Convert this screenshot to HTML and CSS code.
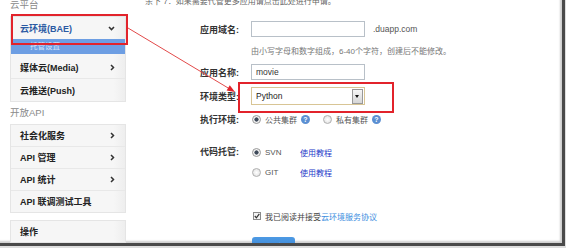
FILE: index.html
```html
<!DOCTYPE html>
<html lang="zh-CN">
<head>
    <meta charset="UTF-8">
    <title>创建应用</title>
    <link rel="stylesheet" href="styles.css">
</head>
<body>
    <div class="frame">
        <aside class="side">
            <div class="side-title first">云平台</div>
            <ul class="menu">
                <li class="item active">云环境(BAE)
                    <svg class="chev" width="7" height="5" viewBox="0 0 7 5"><path d="M1 1 L3.5 3.5 L6 1" fill="none" stroke="#333" stroke-width="1.6"/></svg>
                </li>
                <li class="sub">托管设置</li>
                <li class="item media">媒体云(Media)
                    <svg class="chev" width="5" height="7" viewBox="0 0 5 7"><path d="M1 1 L3.5 3.5 L1 6" fill="none" stroke="#333" stroke-width="1.5"/></svg>
                </li>
                <li class="item tall">云推送(Push)</li>
            </ul>
            <div class="side-title">开放API</div>
            <ul class="menu">
                <li class="item">社会化服务
                    <svg class="chev" width="5" height="7" viewBox="0 0 5 7"><path d="M1 1 L3.5 3.5 L1 6" fill="none" stroke="#333" stroke-width="1.5"/></svg>
                </li>
                <li class="item">API 管理
                    <svg class="chev" width="5" height="7" viewBox="0 0 5 7"><path d="M1 1 L3.5 3.5 L1 6" fill="none" stroke="#333" stroke-width="1.5"/></svg>
                </li>
                <li class="item">API 统计
                    <svg class="chev" width="5" height="7" viewBox="0 0 5 7"><path d="M1 1 L3.5 3.5 L1 6" fill="none" stroke="#333" stroke-width="1.5"/></svg>
                </li>
                <li class="item">API 联调测试工具</li>
            </ul>
            <ul class="menu">
                <li class="item">操作</li>
            </ul>
        </aside>

        <main class="main">
            <p class="note">余下 7：如果需要代管更多应用请点击此处进行申请。</p>
            <div class="form">
                <div class="row r1">
                    <span class="label">应用域名:</span>
                    <input class="text" type="text" value="">
                    <span class="suffix">.duapp.com</span>
                </div>
                <div class="hint">由小写字母和数字组成，6-40个字符，创建后不能修改。</div>
                <div class="row r2">
                    <span class="label">应用名称:</span>
                    <input class="text" type="text" value="movie">
                </div>
                <div class="row r3">
                    <span class="label">环境类型:</span>
                    <div class="select">
                        <span>Python</span>
                        <div class="arrow"></div>
                    </div>
                </div>
                <div class="row r4">
                    <span class="label">执行环境:</span>
                    <span class="opt"><i class="radio on"></i>公共集群<i class="help">?</i></span>
                    <span class="opt second"><i class="radio"></i>私有集群<i class="help">?</i></span>
                </div>
                <div class="row r5">
                    <span class="label">代码托管:</span>
                    <div class="choices">
                        <div class="line"><span class="opt fixed"><i class="radio on"></i>SVN</span><a class="link">使用教程</a></div>
                        <div class="line"><span class="opt fixed"><i class="radio"></i>GIT</span><a class="link">使用教程</a></div>
                    </div>
                </div>
                <div class="agree">
                    <i class="check">
                        <svg width="6" height="6" viewBox="0 0 6 6"><path d="M0.8 3 L2.4 4.8 L5.3 0.8" fill="none" stroke="#333" stroke-width="1.2"/></svg>
                    </i>
                    我已阅读并接受<a class="link light">云环境服务协议</a>
                </div>
                <button class="submit">确 定</button>
            </div>
        </main>

        <svg class="marks" width="562" height="243" viewBox="0 0 562 243">
            <rect x="12" y="15" width="115" height="29" fill="none" stroke="#e2232b" stroke-width="2"/>
            <rect x="239" y="83" width="154" height="29" fill="none" stroke="#e2232b" stroke-width="2"/>
            <line x1="128" y1="28" x2="229" y2="88.5" stroke="#e24a4a" stroke-width="1"/>
            <polygon points="235,92 226.6,90.4 229.8,85.2" fill="#e2232b"/>
        </svg>
    </div>
</body>
</html>
```

FILE: styles.css
```css
body {
    margin: 0;
    background-color: #dedede;
    font-family: 'Liberation Sans', 'Noto Sans CJK SC', sans-serif;
    color: #333;
}
.frame {
    position: relative;
    display: flex;
    width: 562px;
    height: 243px;
    background-color: #fff;
    border-right: 3px solid #4a4a4a;
    border-bottom: 3px solid #4a4a4a;
    box-shadow: inset -2px -2px 2px #cfcfcf;
    overflow: hidden;
}
.side {
    flex: none;
    width: 116px;
    margin-left: 10px;
}
.side-title {
    height: 22px;
    line-height: 22px;
    font-size: 9.5px;
    color: #8a8a8a;
}
.side-title.first {
    height: 14px;
    line-height: 14px;
    margin-top: -2px;
    margin-bottom: 4px;
}
.menu {
    list-style: none;
    margin: 0;
    padding: 0;
    background: linear-gradient(90deg, #f6f6f6 90%, #eeeeee);
    border: 1px solid #e5e5e5;
}
.menu + .menu {
    margin-top: 7px;
}
.item {
    display: flex;
    justify-content: space-between;
    align-items: center;
    height: 21px;
    padding: 0 9px;
    font-size: 9px;
    font-weight: bold;
    color: #222;
    border-top: 1px solid #e8e8e8;
}
.item:first-child {
    border-top: 0;
}
.item.active {
    height: 22px;
    color: #2b5aa3;
}
.item.media {
    height: 22px;
    margin-top: 2px;
    border-top: 0;
}
.item.tall {
    height: 22px;
}
.chev {
    margin-right: 1px;
}
.sub {
    height: 15px;
    line-height: 15px;
    padding-left: 19px;
    background-color: #6d9ee3;
    color: #d5e3f8;
    font-size: 7.5px;
}
.main {
    flex: 1;
    margin-left: 19px;
}
.note {
    margin: -4px 0 0;
    line-height: 12px;
    font-size: 8px;
    color: #666;
}
.form {
    padding-left: 55px;
}
.row {
    display: flex;
    align-items: center;
}
.label {
    flex: none;
    width: 51px;
    font-size: 9px;
    font-weight: bold;
    color: #333;
}
.r1 {
    margin-top: 13px;
}
.r2 {
    margin-top: 6px;
}
.r3 {
    margin-top: 7px;
}
.r4 {
    margin-top: 7px;
    height: 14px;
}
.r5 {
    margin-top: 19px;
    align-items: flex-start;
}
.r5 .label {
    line-height: 14px;
}
.text {
    box-sizing: border-box;
    width: 114px;
    height: 16px;
    margin: 0;
    padding: 0 4px;
    border: 1px solid #b8c0c8;
    font-family: 'Liberation Sans', sans-serif;
    font-size: 8.5px;
    color: #333;
}
.suffix {
    margin-left: 8px;
    font-size: 8.5px;
    color: #555;
}
.hint {
    margin: 9px 0 0 51px;
    line-height: 12px;
    font-size: 8px;
    color: #777;
}
.select {
    box-sizing: border-box;
    display: flex;
    align-items: center;
    width: 114px;
    height: 18px;
    border: 1px solid #d8c595;
    background-color: #fff;
    font-size: 8.5px;
    color: #222;
}
.select span {
    padding-left: 4px;
}
.arrow {
    position: relative;
    width: 9px;
    height: 13px;
    margin-left: auto;
    margin-right: 1px;
    border: 1px solid #999;
    background: linear-gradient(#f6f6f6, #d6d6d6);
}
.arrow::after {
    content: '';
    position: absolute;
    left: 2px;
    top: 5px;
    border-left: 2.5px solid transparent;
    border-right: 2.5px solid transparent;
    border-top: 3px solid #111;
}
.opt {
    display: flex;
    align-items: center;
    font-size: 8px;
    color: #555;
}
.opt.second {
    margin-left: 12px;
}
.opt.fixed {
    width: 49px;
}
.radio {
    width: 7px;
    height: 7px;
    margin: 0 4px 0 1px;
    border: 1px solid #b0b0b0;
    border-radius: 50%;
    background: radial-gradient(#fff, #dcdcdc);
}
.radio.on {
    border-color: #999;
    background: radial-gradient(circle, #3f4a5a 0 1.8px, #f2f2f2 2.4px);
}
.help {
    width: 9px;
    height: 9px;
    margin-left: 4px;
    border-radius: 50%;
    background-color: #5b8fd2;
    color: #fff;
    font-size: 7px;
    font-style: normal;
    font-weight: bold;
    line-height: 9px;
    text-align: center;
}
.choices .line {
    display: flex;
    align-items: center;
    height: 14px;
}
.choices .line + .line {
    margin-top: 6px;
}
.link {
    font-size: 8px;
    color: #2438c8;
}
.link.light {
    color: #3d8ee0;
}
.agree {
    display: flex;
    align-items: center;
    height: 14px;
    margin: 30px 0 0 51px;
    font-size: 8px;
    color: #444;
}
.check {
    box-sizing: border-box;
    display: flex;
    align-items: center;
    justify-content: center;
    width: 8px;
    height: 8px;
    margin: 0 4px 0 2px;
    border: 1px solid #8a8a8a;
    background-color: #f4f4f4;
}
.submit {
    display: block;
    width: 43px;
    height: 20px;
    margin: 14px 0 0 52px;
    padding: 0;
    border: 0;
    border-radius: 3px;
    background: linear-gradient(#4d9ae4, #2f78c9);
    color: #fff;
    font-size: 9px;
}
.marks {
    position: absolute;
    top: 0;
    left: 0;
    pointer-events: none;
}
```
